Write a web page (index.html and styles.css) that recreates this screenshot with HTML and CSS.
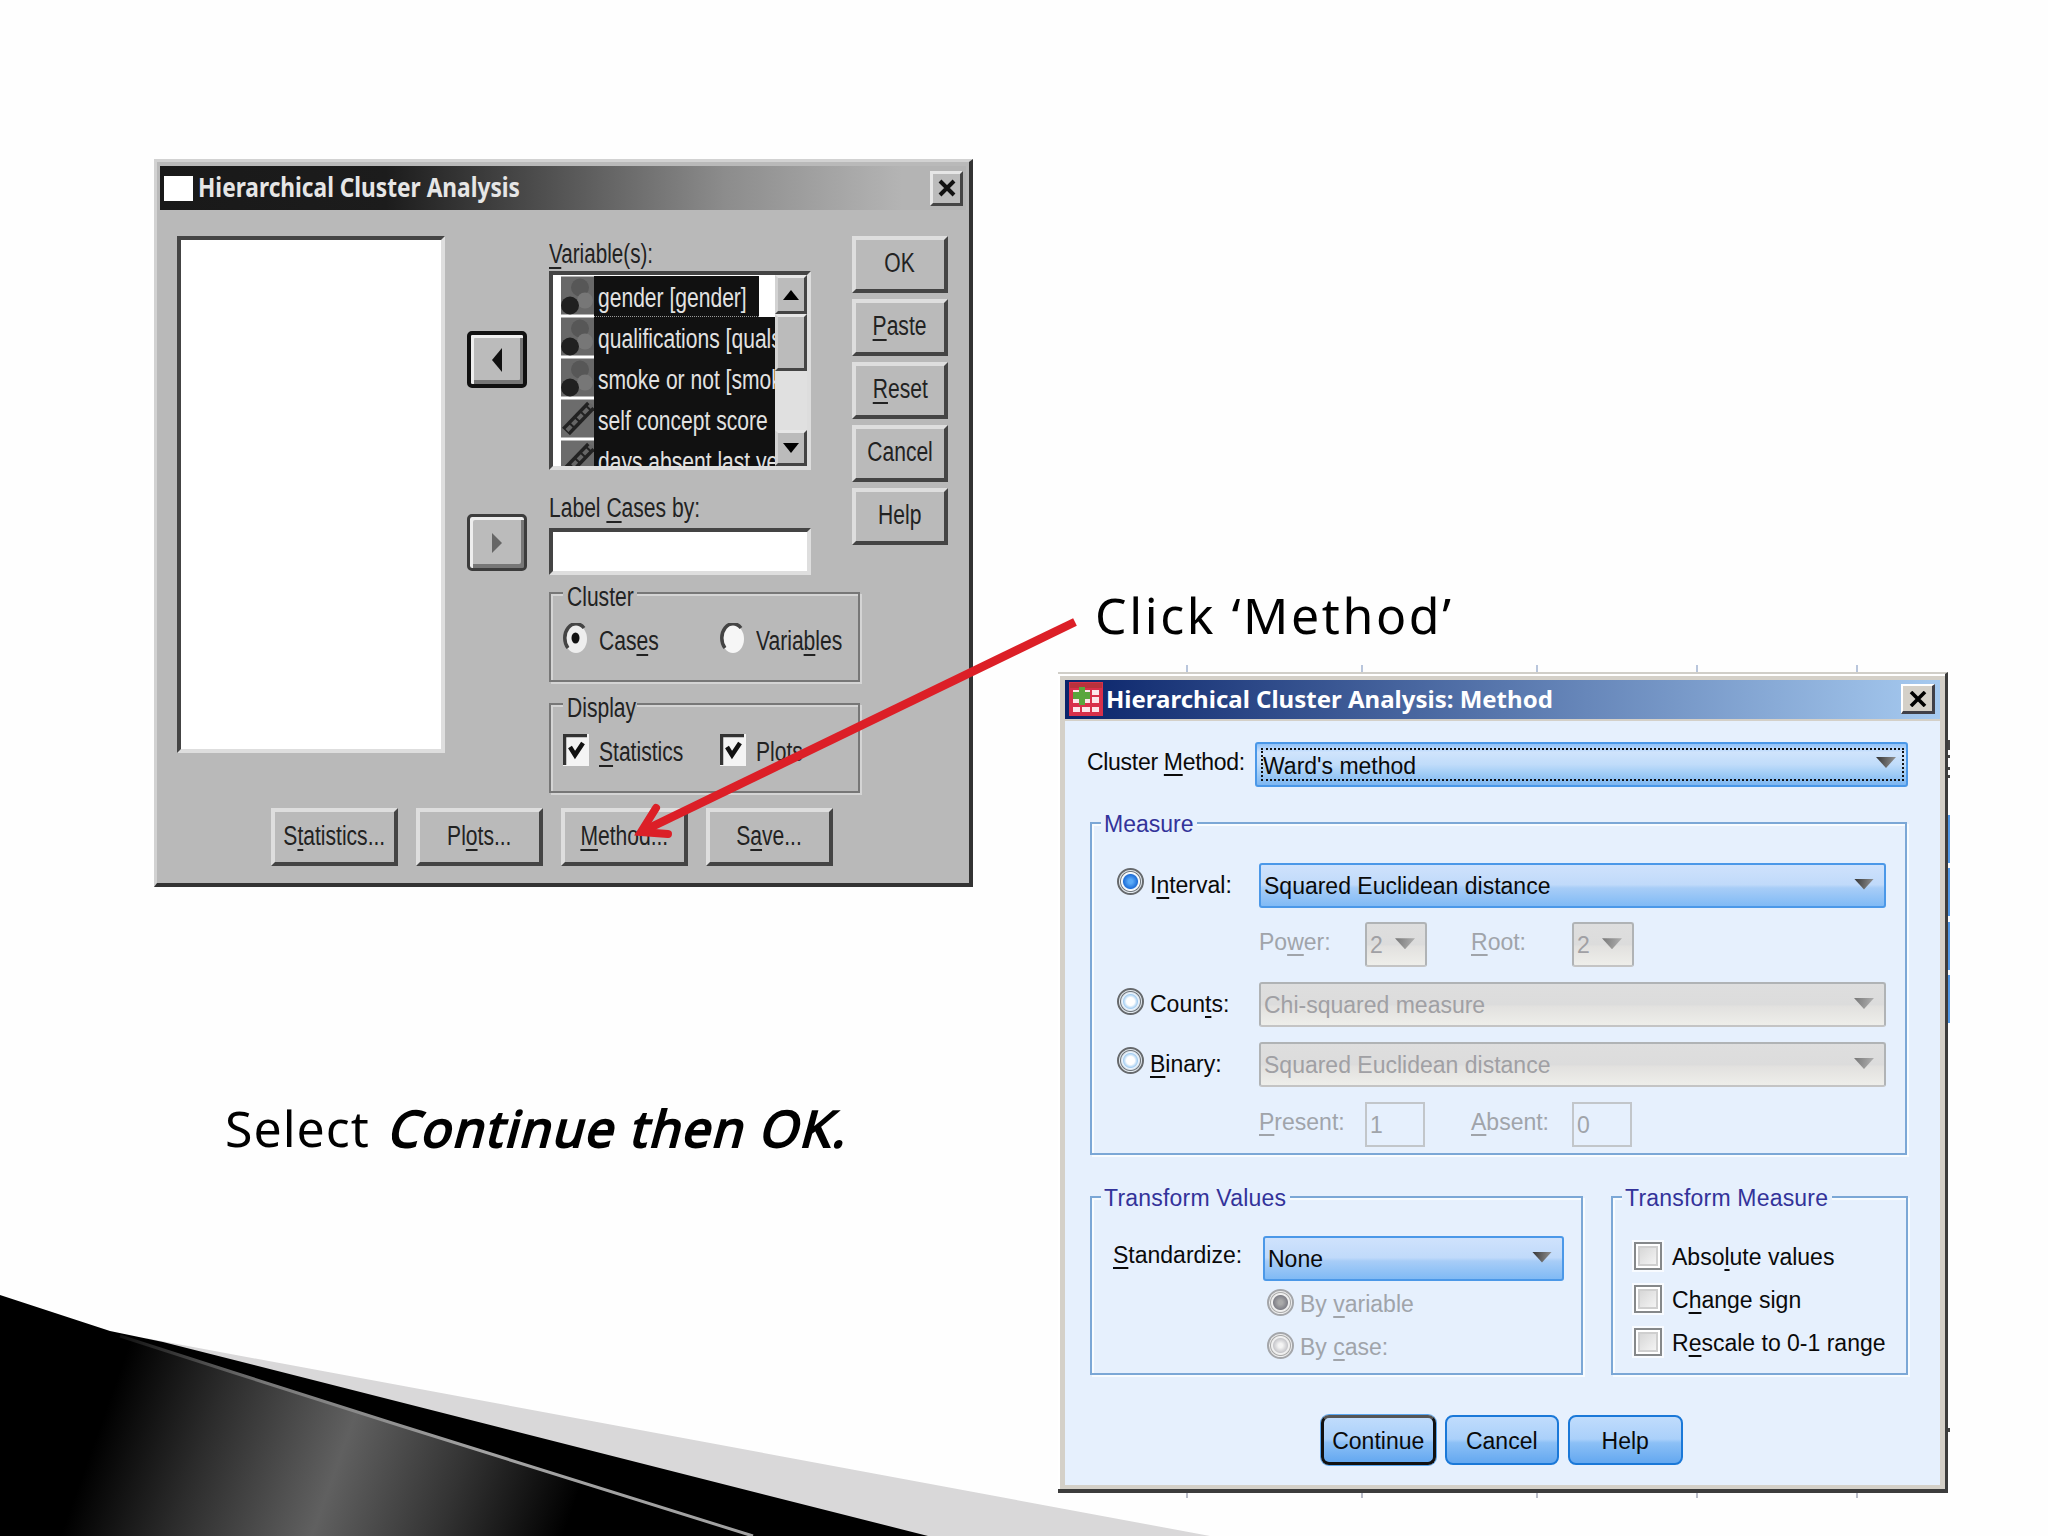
FILE: index.html
```html
<!DOCTYPE html>
<html lang="en">
<head>
    <meta charset="UTF-8">
    <meta name="viewport" content="width=device-width, initial-scale=1.0">
    <title>Hierarchical Cluster Analysis</title>
    <link rel="stylesheet" href="styles.css">
</head>
<body>
    <div class="slide">
        <svg class="swoosh" width="1230" height="246" viewBox="0 1290 1230 246">
            <defs>
                <linearGradient id="shine" gradientUnits="userSpaceOnUse" x1="95" y1="1440" x2="540" y2="1600">
                    <stop offset="0" stop-color="#000"/>
                    <stop offset="0.22" stop-color="#2c2c2c"/>
                    <stop offset="0.5" stop-color="#606060"/>
                    <stop offset="0.75" stop-color="#333"/>
                    <stop offset="1" stop-color="#000"/>
                </linearGradient>
                <linearGradient id="edge" gradientUnits="userSpaceOnUse" x1="120" y1="0" x2="480" y2="0">
                    <stop offset="0" stop-color="#111"/>
                    <stop offset="0.4" stop-color="#777"/>
                    <stop offset="1" stop-color="#a2a2a2"/>
                </linearGradient>
            </defs>
            <path d="M145 1338L1210 1536H700Z" fill="#d9d8d9"/>
            <path d="M0 1295L110 1331L163 1342L928 1536H0Z" fill="#000"/>
            <path d="M0 1299L120 1336L235 1373L392 1423L753 1536H0Z" fill="url(#shine)"/>
            <path d="M120 1336L235 1373L392 1423L753 1536" fill="none" stroke="url(#edge)" stroke-width="3"/>
        </svg>

        <p class="note note-click">Click ‘Method’</p>
        <p class="note note-select">Select <b>Continue then OK.</b></p>

        <!-- main dialog -->
        <div class="classic">
            <div class="classic-title">
                <i class="classic-icon"></i>
                <span class="classic-name">Hierarchical Cluster Analysis</span>
                <button class="classic-close">
                    <svg width="18" height="18" viewBox="0 0 18 18"><path d="M2 2L16 16M16 2L2 16" stroke="#111" stroke-width="4"/></svg>
                </button>
            </div>
            <div class="classic-body">
                <div class="source-list"></div>
                <div class="movers">
                    <button class="mover mover-active"><svg width="12" height="24" viewBox="0 0 12 24"><path d="M11 0V24L1 12Z" fill="#111"/></svg></button>
                    <button class="mover"><svg width="12" height="24" viewBox="0 0 12 24"><path d="M1 2V22L11 12Z" fill="#666"/></svg></button>
                </div>
                <div class="main">
                    <div class="main-top">
                        <div class="fields">
                            <div class="label label-vars"><span class="txt"><u>V</u>ariable(s):</span></div>
                            <div class="varlist">
                                <div class="vars">
                                    <div class="var var-first"><svg class="var-icon" viewBox="0 0 33 38"><rect width="33" height="38" fill="#686868"/><circle cx="19" cy="11" r="9" fill="#575757"/><circle cx="24" cy="24" r="8" fill="#777"/><circle cx="9" cy="29" r="9" fill="#202020"/></svg><span class="var-name"><span class="txt">gender [gender]</span></span></div>
                                    <div class="var"><svg class="var-icon" viewBox="0 0 33 38"><rect width="33" height="38" fill="#686868"/><circle cx="19" cy="11" r="9" fill="#575757"/><circle cx="24" cy="24" r="8" fill="#777"/><circle cx="9" cy="29" r="9" fill="#202020"/></svg><span class="var-name"><span class="txt">qualifications [quals</span></span></div>
                                    <div class="var"><svg class="var-icon" viewBox="0 0 33 38"><rect width="33" height="38" fill="#686868"/><circle cx="19" cy="11" r="9" fill="#575757"/><circle cx="24" cy="24" r="8" fill="#777"/><circle cx="9" cy="29" r="9" fill="#202020"/></svg><span class="var-name"><span class="txt">smoke or not [smok</span></span></div>
                                    <div class="var"><svg class="var-icon" viewBox="0 0 33 38"><rect width="33" height="38" fill="#6c6c6c"/><path d="M5 32L30 6" stroke="#222" stroke-width="11"/><path d="M6 31L31 5" stroke="#666" stroke-width="4" stroke-dasharray="6 2"/></svg><span class="var-name"><span class="txt">self concept score</span></span></div>
                                    <div class="var"><svg class="var-icon" viewBox="0 0 33 38"><rect width="33" height="38" fill="#6c6c6c"/><path d="M5 32L30 6" stroke="#222" stroke-width="11"/><path d="M6 31L31 5" stroke="#666" stroke-width="4" stroke-dasharray="6 2"/></svg><span class="var-name"><span class="txt">days absent last ye</span></span></div>
                                </div>
                                <div class="scrollbar">
                                    <span class="scroll-btn"><svg width="16" height="10" viewBox="0 0 16 10"><path d="M0 10L8 0L16 10Z"/></svg></span>
                                    <span class="scroll-thumb"></span>
                                    <span class="scroll-btn scroll-down"><svg width="16" height="10" viewBox="0 0 16 10"><path d="M0 0L8 10L16 0Z"/></svg></span>
                                </div>
                            </div>
                            <div class="label label-cases"><span class="txt">Label <u>C</u>ases by:</span></div>
                            <div class="case-input"></div>
                        </div>
                        <div class="side-buttons">
                            <button class="raised"><span class="txt">OK</span></button>
                            <button class="raised"><span class="txt"><u>P</u>aste</span></button>
                            <button class="raised"><span class="txt"><u>R</u>eset</span></button>
                            <button class="raised"><span class="txt">Cancel</span></button>
                            <button class="raised"><span class="txt">Help</span></button>
                        </div>
                    </div>
                    <div class="group">
                        <div class="group-name"><span class="txt">Cluster</span></div>
                        <div class="options">
                            <svg class="opt-mark" width="26" height="32" viewBox="0 0 26 32"><ellipse cx="13" cy="16" rx="11" ry="14" fill="#eee"/><path d="M5 25A11 14 0 0 1 21 5" fill="none" stroke="#444" stroke-width="3.5"/><ellipse cx="12.5" cy="15" rx="4" ry="5.5" fill="#111"/></svg>
                            <span class="opt-text"><span class="txt">Cas<u>e</u>s</span></span>
                            <svg class="opt-mark" width="26" height="32" viewBox="0 0 26 32"><ellipse cx="13" cy="16" rx="11" ry="14" fill="#f6f6f6"/><path d="M5 25A11 14 0 0 1 21 5" fill="none" stroke="#444" stroke-width="3.5"/></svg>
                            <span class="opt-text"><span class="txt">Varia<u>b</u>les</span></span>
                        </div>
                    </div>
                    <div class="group">
                        <div class="group-name"><span class="txt">Display</span></div>
                        <div class="options">
                            <svg class="opt-mark" width="26" height="32" viewBox="0 0 26 32"><rect width="26" height="32" fill="#f4f4f4"/><path d="M1.5 31V1.5H24" fill="none" stroke="#333" stroke-width="3.5"/><path d="M7 13L12 21L20 9" fill="none" stroke="#111" stroke-width="4.5"/></svg>
                            <span class="opt-text"><span class="txt"><u>S</u>tatistics</span></span>
                            <svg class="opt-mark" width="26" height="32" viewBox="0 0 26 32"><rect width="26" height="32" fill="#f4f4f4"/><path d="M1.5 31V1.5H24" fill="none" stroke="#333" stroke-width="3.5"/><path d="M7 13L12 21L20 9" fill="none" stroke="#111" stroke-width="4.5"/></svg>
                            <span class="opt-text"><span class="txt">Plots</span></span>
                        </div>
                    </div>
                </div>
            </div>
            <div class="classic-footer">
                <button class="raised"><span class="txt">S<u>t</u>atistics...</span></button>
                <button class="raised"><span class="txt">Pl<u>o</u>ts...</span></button>
                <button class="raised"><span class="txt"><u>M</u>ethod...</span></button>
                <button class="raised"><span class="txt">S<u>a</u>ve...</span></button>
            </div>
        </div>

        <!-- bits of the data grid behind the second dialog -->
        <svg class="backdrop" width="900" height="840" viewBox="1055 662 900 840">
            <path d="M1187 665v8M1362 665v8M1537 665v8M1697 665v8M1857 665v8" stroke="#b9c6dc" stroke-width="2"/>
            <path d="M1187 1493v5M1362 1493v5M1537 1493v5M1697 1493v5M1857 1493v5" stroke="#b9bcc8" stroke-width="2"/>
            <path d="M1949 815v48M1949 868v48M1949 922v48M1949 975v48" stroke="#4f97e6" stroke-width="2"/>
            <path d="M1949 740v10M1949 755v3M1949 767v3M1949 775v3M1949 1428v4" stroke="#444" stroke-width="2"/>
        </svg>

        <!-- method dialog -->
        <div class="method">
            <div class="method-title">
                <svg class="method-icon" width="34" height="34" viewBox="0 0 34 34">
                    <rect width="34" height="34" fill="#d8304a"/>
                    <rect x="1" y="1" width="32" height="5" fill="#b8323c"/>
                    <path d="M4 8h7v5H4zM13 8h8v5h-8zM23 8h7v5h-7zM4 15h7v6H4zM13 15h8v6h-8zM23 15h7v6h-7zM4 25h7v5H4zM13 25h8v5h-8zM23 25h7v5h-7z" fill="#fde6ea"/>
                    <path d="M10 5h6v5h5v7h-5v6h-6v-6H4v-7h6z" fill="#5aa63c"/>
                </svg>
                <span class="method-name">Hierarchical Cluster Analysis: Method</span>
                <button class="method-close">
                    <svg width="18" height="16" viewBox="0 0 18 16"><path d="M2 1L16 15M16 1L2 15" stroke="#000" stroke-width="3.6"/></svg>
                </button>
            </div>
            <div class="method-body">
                <div class="row row-method">
                    <span class="row-label">Cluster <u>M</u>ethod:</span>
                    <div class="combo combo-focus"><span>Ward's method</span><i class="caret"></i></div>
                </div>

                <div class="panel panel-measure">
                    <div class="panel-name">Measure</div>
                    <div class="row">
                        <i class="radio radio-on"></i><span class="radio-label">I<u>n</u>terval:</span>
                        <div class="combo">Squared Euclidean distance<i class="caret"></i></div>
                    </div>
                    <div class="row row-params">
                        <span>Po<u>w</u>er:</span>
                        <div class="combo combo-small off">2<i class="caret"></i></div>
                        <span><u>R</u>oot:</span>
                        <div class="combo combo-small off">2<i class="caret"></i></div>
                    </div>
                    <div class="row">
                        <i class="radio"></i><span class="radio-label">Coun<u>t</u>s:</span>
                        <div class="combo off">Chi-squared measure<i class="caret"></i></div>
                    </div>
                    <div class="row">
                        <i class="radio"></i><span class="radio-label"><u>B</u>inary:</span>
                        <div class="combo off">Squared Euclidean distance<i class="caret"></i></div>
                    </div>
                    <div class="row row-params">
                        <span><u>P</u>resent:</span>
                        <div class="entry">1</div>
                        <span><u>A</u>bsent:</span>
                        <div class="entry">0</div>
                    </div>
                </div>

                <div class="panels">
                    <div class="panel panel-values">
                        <div class="panel-name">Transform Values</div>
                        <div class="row row-std">
                            <span class="std-label"><u>S</u>tandardize:</span>
                            <div class="combo">None<i class="caret"></i></div>
                        </div>
                        <div class="by"><i class="radio radio-on radio-off"></i>By <u>v</u>ariable</div>
                        <div class="by"><i class="radio radio-off"></i>By <u>c</u>ase:</div>
                    </div>
                    <div class="panel panel-transform">
                        <div class="panel-name">Transform Measure</div>
                        <div class="check"><i class="box"></i>Abso<u>l</u>ute values</div>
                        <div class="check"><i class="box"></i>C<u>h</u>ange sign</div>
                        <div class="check"><i class="box"></i>R<u>e</u>scale to 0-1 range</div>
                    </div>
                </div>

                <div class="method-footer">
                    <button class="blue blue-default">Continue</button>
                    <button class="blue">Cancel</button>
                    <button class="blue">Help</button>
                </div>
            </div>
        </div>

        <svg class="arrow" width="470" height="250" viewBox="620 600 470 250">
            <path d="M1075 622L641 832" stroke="#dc1f27" stroke-width="8.5" fill="none"/>
            <path d="M656 808L641 832L668 834" stroke="#dc1f27" stroke-width="8" fill="none" stroke-linecap="round" stroke-miterlimit="10"/>
        </svg>
    </div>
</body>
</html>
```
FILE: styles.css
```css
* {
    box-sizing: border-box;
}

body {
    margin: 0;
    background: #fefefe;
    font-family: "Liberation Sans", Arial, sans-serif;
}

button {
    font: inherit;
    padding: 0;
    margin: 0;
}

.slide {
    position: relative;
    width: 2048px;
    height: 1536px;
    overflow: hidden;
}

.swoosh {
    position: absolute;
    left: 0;
    bottom: 0;
}

.note {
    position: absolute;
    margin: 0;
    font-family: "Noto Sans", "Open Sans", sans-serif;
    font-size: 50px;
    line-height: 60px;
    color: #000;
    white-space: nowrap;
}

.note-click {
    left: 1095px;
    top: 585px;
    letter-spacing: 2.6px;
}

.note-select {
    left: 225px;
    top: 1098px;
    letter-spacing: 1px;
}

.note b {
    display: inline-block;
    margin-left: 7px;
    font-weight: normal;
    letter-spacing: 1.7px;
    transform: skewX(-15deg);
    -webkit-text-stroke: 2px #000;
}

/* grey dialog */

.classic {
    position: absolute;
    left: 154px;
    top: 159px;
    width: 819px;
    height: 728px;
    padding: 4px 3px 0 3px;
    background: #b9b9b9;
    border-style: solid;
    border-width: 3px 4px 4px 3px;
    border-color: #d2d2d2 #333 #333 #d2d2d2;
    font-size: 27px;
    color: #222;
}

.txt {
    display: inline-block;
    transform: scaleX(0.78);
    transform-origin: left center;
    white-space: nowrap;
}

.classic u {
    text-decoration-thickness: 2px;
    text-underline-offset: 4px;
    text-decoration-skip-ink: none;
}

.classic-title {
    display: flex;
    align-items: center;
    height: 44px;
    padding: 0 3px 0 4px;
    background: linear-gradient(90deg, #191919 0%, #1c1c1c 28%, #505050 48%, #8c8c8c 70%, #b4b4b4 92%);
}

.classic-icon {
    width: 29px;
    height: 25px;
    background: #fff;
}

.classic-name {
    flex: 1;
    margin: -3px 0 0 5px;
    font-family: "Noto Sans", sans-serif;
    font-size: 27px;
    font-weight: bold;
    color: #e6e6e6;
    white-space: nowrap;
    transform: scaleX(0.84);
    transform-origin: left center;
}

.classic-close {
    display: flex;
    align-items: center;
    justify-content: center;
    width: 33px;
    height: 35px;
    background: #bbb;
    border: 3px solid;
    border-color: #e6e6e6 #444 #444 #e6e6e6;
}

.classic-body {
    display: flex;
    gap: 22px;
    height: 585px;
    padding: 26px 0 0 17px;
}

.source-list {
    width: 268px;
    height: 517px;
    background: #fff;
    border: 4px solid;
    border-color: #444 #dedede #dedede #444;
}

.movers {
    width: 60px;
    padding-top: 95px;
}

.mover {
    display: flex;
    align-items: center;
    justify-content: center;
    width: 60px;
    height: 57px;
    margin-bottom: 126px;
    background: #bbb;
    border: 3px solid #3c3c3c;
    border-radius: 5px;
    box-shadow: inset 3px 3px #eee, inset -3px -4px #777;
}

.mover-active {
    border: 4px solid #111;
}

.main-top {
    display: flex;
    gap: 41px;
    height: 339px;
}

.fields {
    width: 262px;
}

.label-vars {
    height: 35px;
    line-height: 36px;
}

.label-vars .txt {
    transform: scaleX(0.765);
}

.label-cases {
    height: 58px;
    padding-top: 18px;
    line-height: 41px;
}

.varlist {
    display: flex;
    height: 199px;
    background: #fff;
    border: 4px solid;
    border-color: #444 #ddd #ddd #444;
    overflow: hidden;
}

.vars {
    width: 223px;
    padding: 1px 0 0 8px;
    overflow: hidden;
}

.var {
    display: flex;
    height: 41px;
    color: #e2e2e2;
}

.var-icon {
    flex: none;
    width: 33px;
    height: 39px;
}

.var-name {
    width: 182px;
    padding-left: 4px;
    line-height: 45px;
    background: #111;
    overflow: hidden;
}

.var-first .var-name {
    width: 165px;
    border-bottom: 1px dotted #999;
}

.scrollbar {
    display: flex;
    flex-direction: column;
    width: 32px;
    background: #e0e0e0;
}

.scroll-btn,
.scroll-thumb {
    display: flex;
    align-items: center;
    justify-content: center;
    height: 39px;
    background: #bbb;
    border: 3px solid;
    border-color: #e6e6e6 #444 #444 #d2d2d2;
}

.scroll-thumb {
    height: 57px;
}

.scroll-down {
    height: 36px;
    margin-top: auto;
}

.case-input {
    height: 47px;
    background: #fff;
    border: 4px solid;
    border-color: #444 #dedede #dedede #444;
}

.side-buttons {
    display: flex;
    flex-direction: column;
    gap: 6px;
}

.raised {
    display: flex;
    align-items: center;
    justify-content: center;
    width: 96px;
    height: 57px;
    padding-bottom: 2px;
    background: #bababa;
    border: 4px solid;
    border-color: #dedede #444 #444 #dedede;
    color: #222;
}

.raised .txt {
    transform-origin: center;
}

.group {
    width: 311px;
    height: 90px;
    margin-top: 17px;
    padding-left: 12px;
    border: 2px solid #777;
    box-shadow: inset 2px 2px #d4d4d4, 2px 2px #d4d4d4;
}

.group + .group {
    margin-top: 21px;
}

.group-name {
    width: 74px;
    margin-top: -10px;
    padding-left: 4px;
    background: #b9b9b9;
    line-height: 26px;
}

.options {
    display: flex;
    align-items: center;
    height: 32px;
    margin-top: 15px;
}

.opt-mark {
    flex: none;
    margin-top: -4px;
}

.opt-text {
    flex: none;
    width: 121px;
    margin-left: 10px;
    white-space: nowrap;
}

.classic-footer {
    display: flex;
    gap: 18.5px;
    margin-top: 13px;
    padding-left: 111px;
}

.classic-footer .raised {
    width: 126.5px;
    height: 58px;
}

/* blue dialog */

.backdrop {
    position: absolute;
    left: 1055px;
    top: 662px;
}

.method {
    position: absolute;
    left: 1058px;
    top: 672px;
    width: 890px;
    height: 821px;
    padding: 2px 0 0 2px;
    background: #fff;
    border-style: solid;
    border-width: 2px 3px 4px 0;
    border-color: #d0cec8 #3c3c3c #3c3c3c #fff;
    font-size: 23px;
    color: #0a0a0a;
}

.method u {
    text-decoration-thickness: 2px;
    text-underline-offset: 4px;
    text-decoration-skip-ink: none;
}

.method-title {
    display: flex;
    align-items: center;
    height: 43px;
    padding: 0 5px 1px 4px;
    border: solid #d4d0c8;
    border-width: 4px 5px 0 5px;
    background: linear-gradient(90deg, #0a246a, #a6caf0);
}

.method-name {
    flex: 1;
    margin: -1px 0 0 3px;
    font-family: "Noto Sans", sans-serif;
    font-size: 24px;
    font-weight: bold;
    color: #fff;
    white-space: nowrap;
}

.method-close {
    display: flex;
    align-items: center;
    justify-content: center;
    width: 34px;
    height: 30px;
    background: #d4d0c8;
    border: solid;
    border-width: 2px 3px 3px 2px;
    border-color: #fff #404048 #404048 #fff;
}

.method-body {
    height: 770px;
    padding: 21px 32px 0 25px;
    border: solid #d4d0c8;
    border-width: 2px 5px 4px 5px;
    background: #e6f0fd;
}

.row {
    display: flex;
    align-items: center;
    height: 44px;
    margin-bottom: 15.8px;
    white-space: nowrap;
}

.row-method {
    height: 45px;
    margin-bottom: 35px;
}

.row-label {
    width: 168px;
    margin: -5px 0 0 -3px;
    flex: none;
    letter-spacing: -0.3px;
}

.combo {
    display: flex;
    flex: 1;
    align-items: center;
    justify-content: space-between;
    height: 45px;
    padding: 2px 10px 0 3px;
    border: 2px solid #4b98e8;
    border-radius: 3px;
    background: linear-gradient(#cfe2fc 0%, #c0dafa 48%, #a8cdf7 56%, #80baf5 100%);
}

.combo-focus {
    padding: 0 5px 0 4px;
    background: linear-gradient(#8fc1f8 0, #d0e4fc 20%, #c0dcfa 50%, #a4cef6 70%, #7cb6f2 100%);
}

.combo-focus span {
    flex: 1;
    height: 33px;
    margin-right: -28px;
    line-height: 33px;
    border: 2px dotted #111;
}

.combo-focus .caret {
    margin-right: 5px;
}

.caret {
    width: 20px;
    height: 11px;
    margin-top: -4px;
    background: linear-gradient(100deg, #333, #999);
    clip-path: polygon(0 0, 100% 0, 50% 100%);
}

.off {
    color: #a0a0a4;
    border-color: #b0b3b5 #b0b3b5 #c4c4c4;
    background: linear-gradient(#dedede 0%, #dcdcdc 50%, #e2e1df 55%, #eeeeea 100%);
}

.off .caret {
    opacity: 0.6;
}

.panel {
    border: 2px solid #7ba7d6;
    box-shadow: inset 2px 2px #f8fcff, 2px 2px #f8fcff;
}

.panel-name {
    width: fit-content;
    margin: -12px 0 0 9px;
    padding: 0 4px 0 3px;
    background: #e6f0fd;
    line-height: 24px;
    color: #33339a;
}

.panel-measure {
    width: 817px;
    height: 333px;
    padding-right: 19px;
}

.panel-measure .panel-name {
    margin-bottom: 27px;
}

.radio {
    flex: none;
    width: 27px;
    height: 27px;
    margin: 0 6px 7px 25px;
    border: 2px solid #66696c;
    border-radius: 50%;
    background: radial-gradient(circle, #fff 0 4px, #a8d0f2 7px, #e8f2fc 8px, #dde6ee 9px, #70767c 10px, #e4ebf0 11px);
}

.radio-on {
    background: radial-gradient(circle, #5aaaf8 0 2px, #1f6fd8 7px, #e8f2fc 8px, #fff 9px, #70767c 10px, #e4ebf0 11px);
}

.radio-off {
    border-color: #a4a6aa;
    background: radial-gradient(circle, #f4f4f4 0 2px, #c8c8cc 7px, #f0f0f0 8px, #eee 9px, #aaa 10px, #eee 11px);
}

.radio-on.radio-off {
    background: radial-gradient(circle, #aaa 0 2px, #808088 7px, #f0f0f0 8px, #eee 9px, #aaa 10px, #eee 11px);
}

.radio-label {
    width: 109px;
}

.row-params {
    padding-left: 167px;
    color: #a0a4aa;
}

.row-params span {
    width: 106px;
    margin-top: -4px;
}

.row-params > :nth-child(2) {
    margin-right: 44px;
}

.row-params > :nth-child(3) {
    width: 101px;
}

.combo-small {
    flex: none;
    width: 62px;
}

.entry {
    width: 60px;
    height: 45px;
    padding: 0 0 0 3px;
    border: 2px solid #c2c6ca;
    line-height: 42px;
}

.row-params > .entry:nth-child(2) {
    margin-right: 46px;
}

.panels {
    display: flex;
    justify-content: space-between;
    width: 818px;
    margin-top: 41px;
}

.panel-values {
    width: 493px;
    height: 179px;
    padding-right: 17px;
}

.panel-transform .panel-name,
.panel-values .panel-name {
    letter-spacing: 0.2px;
}

.row-std {
    margin: 26px 0 3px;
}

.std-label {
    width: 150px;
    margin: -5px 0 0 21px;
}

.by {
    display: flex;
    align-items: center;
    height: 43px;
    padding-left: 175px;
    white-space: pre;
    color: #a0a4aa;
}

.by .radio {
    margin: 0 6px 5px 0;
}

.panel-transform {
    width: 297px;
    height: 179px;
}

.panel-transform .panel-name {
    margin-bottom: 26px;
}

.check {
    display: flex;
    align-items: center;
    height: 43px;
    padding-left: 21px;
    white-space: pre;
}

.box {
    flex: none;
    width: 28px;
    height: 28px;
    margin: 0 10px 3px 0;
    border: 2px solid #85888a;
    background: linear-gradient(135deg, #d0d0d0, #fbfbfb);
    box-shadow: 0 0 0 2px #f8fbff, inset 0 0 0 2px #fff, inset 0 0 0 4px #cfcfcf;
}

.method-footer {
    display: flex;
    gap: 9px;
    margin: 40px 0 0 231px;
}

.blue {
    width: 114.5px;
    height: 50px;
    border: 2px solid #1a78d8;
    border-radius: 8px;
    background: linear-gradient(#c0dcfc 0%, #aad0fa 48%, #8cc0f6 56%, #64a8f0 100%);
    color: #0a0a0a;
    padding-top: 3px;
}

.blue-default {
    border: 3px solid #111;
    border-top-color: #555;
    box-shadow: 0 0 0 1px #5aa6f0;
}

.arrow {
    position: absolute;
    left: 620px;
    top: 600px;
}
```
